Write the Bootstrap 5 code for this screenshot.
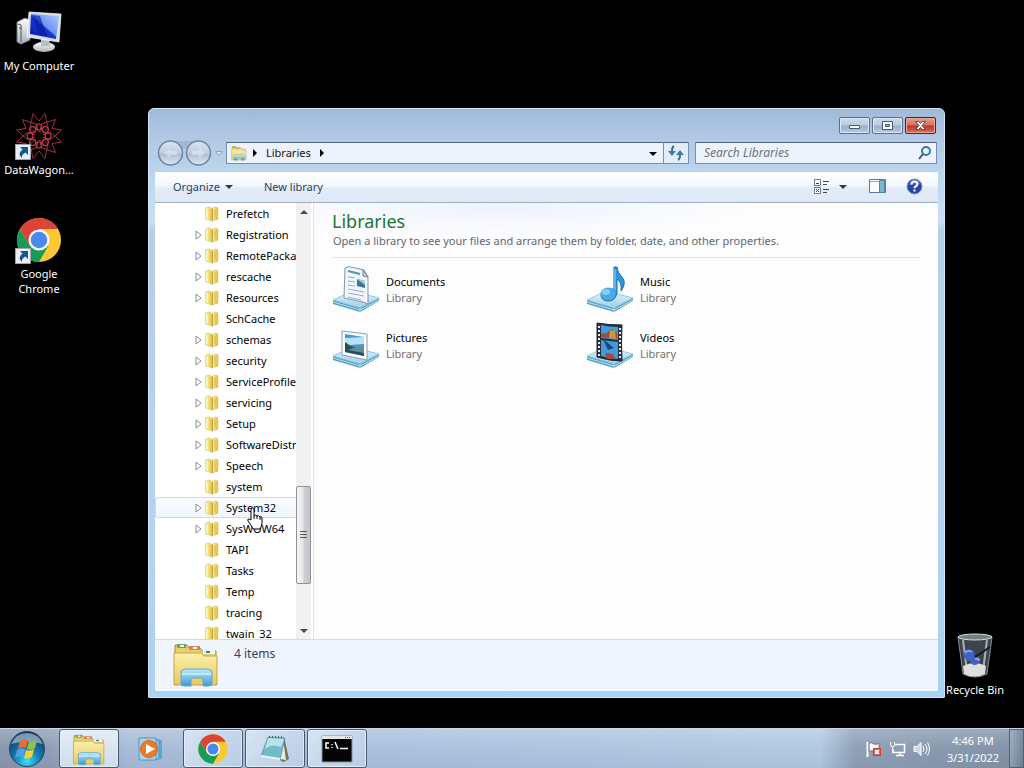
<!DOCTYPE html>
<html lang="en">
<head>
<meta charset="utf-8">
<meta name="viewport" content="width=device-width, initial-scale=1">
<title>Libraries</title>
<link href="https://cdn.jsdelivr.net/npm/bootstrap@5.3.0/dist/css/bootstrap.min.css" rel="stylesheet">
<style>
body{font:11px/16px "Noto Sans","Open Sans",sans-serif;background:#000;color:#000}
button{font:inherit;color:inherit;border:0;background:none;padding:0}
a{color:inherit;text-decoration:none}
svg{display:block;flex:none}
.launcher{width:78px;height:104px;padding-top:8px;color:#fff;line-height:15px;text-align:center;text-shadow:0 1px 2px #000}
.launcher svg{margin-bottom:2px}
.launcher.bin{right:10px;bottom:0}
.win{left:148px;right:79px;top:108px;bottom:30px;padding:0 6px 6px;border:1px solid #d4e6f8;border-radius:6px 6px 1px 1px;
 background:linear-gradient(#9fbad8 0,#b1c9e4 30px,#bcd5ee 64px,#cbdff4 112px,#b5cfe6 122px,#b5d3ee 70%,#a9d2f2)}
.captions{height:33px;padding:8px 2px 0 0;gap:2px}
.cap{width:31px;height:17px;border:1px solid #59708d;border-radius:2px;background:linear-gradient(#cbdcee,#b9cce2 48%,#98b0cc 52%,#b5cbe4);box-shadow:inset 0 0 0 1px #dce8f5}
.cap.shut{border-color:#5a1b21;background:linear-gradient(#e5a193,#d5705c 48%,#bd3520 52%,#d8705d);box-shadow:inset 0 0 0 1px #eda99c}
.navrow{height:30px;padding:0 1px 8px 2px}
.rounds{margin-top:-4px}
.fieldbox{height:22px;border:1px solid #7890ad;background:#edf3fc;border-top-color:#4d627d;color:#111}
.refresh{width:25px;height:22px;border:1px solid #7890ad;border-left:0;border-top-color:#4d627d;background:#e3edfa}
.arrowbox{width:18px;height:20px}
.searchbox{width:242px;margin-left:6px}
.searchbox input{width:200px;border:0;background:none;outline:0;padding:0 0 0 8px;font-size:12px;font-style:italic;color:#6d7380}
.searchbox input::placeholder{color:#6d7380;opacity:1}
.crumb{font-size:11px;margin:0 2px 0 1px}
.cmdbar{height:32px;color:#2b405c;border-bottom:1px solid #a0afc3;padding:0 15px 0 18px;background:linear-gradient(#fff,#f3f8fe 45%,#e2ebf8 55%,#dfe9f6)}
.cmdbar .newlib{margin-left:30px}
.cmdbar .tool{margin-left:20px}
.views{min-height:0}
.tree{width:159px;border-right:1px solid #dfe4ec;background:#fff}
.tree li{height:21px;padding-left:37px;gap:1px;white-space:nowrap;border:1px solid transparent}
.tree li.hot{border-color:#c5dcf3;border-right:0;border-radius:3px 0 0 3px;background:linear-gradient(#fafcff,#eef5fd)}
.tree .twist{width:10px;height:12px}
.tree a{margin-left:5px}
.sbar{width:15px;margin-right:2px;background:#f1f1f3}
.sbar button{height:17px}
.thumb{height:98px;border:1px solid #8e9196;border-radius:2px;background:linear-gradient(90deg,#f6f6f6,#e6e6e8 48%,#cfd0d4 52%,#c4c5ca)}
.up{flex:265 1 0}.down{flex:38 1 0}
.pane{padding:6px 18px 0;background:radial-gradient(260px 36px at 30% 0,#ecf3fc,#fdfdfe00) #fdfdfe}
.pane h1{font-size:18px;line-height:24px;color:#1c7432;margin:0}
.pane .hint{color:#5d6673;border-bottom:1px solid #dce6f0;height:25px;padding-left:1px;white-space:nowrap}
.libs{grid-template-columns:254px 254px;grid-auto-rows:56px;padding-top:8px}
.libs a{gap:6px}
.libs small{font-size:11px;color:#6d7076}
.details{height:53px;border-top:1px solid #cfdae8;background:#f1f5fd;color:#35415c;padding-left:17px}
.details p{font-size:12px;padding:6px 0 0 14px}
.hand{left:246px;top:507px;pointer-events:none}
.tasks{height:40px;border-top:1px solid #c9d6e6;background:linear-gradient(#fff3,#fff0 50%,#0000000a),linear-gradient(90deg,#8997ae 0,#909fb7 50px,#a8bcd8 130px,#a9c2de 400px,#b2c9e3 820px,#8fa1b8 855px,#8392a7)}
.startbtn{width:54px;margin-right:5px}
.task{width:60px;margin-right:2px;border-radius:3px}
.task.open{border:1px solid #48586f;background:linear-gradient(135deg,#d7e4f3,#b7cce4);box-shadow:inset 0 0 0 1px #e1edfa}
.task.front{background:linear-gradient(#e5edf5,#cfdcec)}
.tray{color:#fff;gap:7px}
.clock{width:72px;line-height:17px;text-align:center}
.peek{width:15px;border:1px solid #4f6078;background:linear-gradient(100deg,#a0afc1,#6e7e93)}
</style>
</head>
<body class="vh-100 d-flex flex-column overflow-hidden">
<svg width="0" height="0" class="position-absolute" aria-hidden="true">
 <defs>
  <linearGradient id="gold" x1="0" x2="1"><stop stop-color="#fdf3ae"/><stop offset=".45" stop-color="#f3df7c"/><stop offset="1" stop-color="#d9bc48"/></linearGradient>
  <linearGradient id="yel" x2="0" y2="1"><stop stop-color="#fbf0ac"/><stop offset="1" stop-color="#e8c95c"/></linearGradient>
  <linearGradient id="blu" x2="0" y2="1"><stop stop-color="#b9e9fb"/><stop offset="1" stop-color="#3a9bd4"/></linearGradient>
  <linearGradient id="shelf" x2="0" y2="1"><stop stop-color="#e5f5fb"/><stop offset="1" stop-color="#9bcfe6"/></linearGradient>
  <linearGradient id="glass" x1="0" y1="1" x2="1" y2="0"><stop stop-color="#0a19a8"/><stop offset=".48" stop-color="#1936d6"/><stop offset=".52" stop-color="#6a93f2"/><stop offset="1" stop-color="#b3cdfc"/></linearGradient>
  <linearGradient id="silver" x2="0" y2="1"><stop stop-color="#fff"/><stop offset="1" stop-color="#a9b0b7"/></linearGradient>
  <radialGradient id="orb" cx=".5" cy=".85" r=".8"><stop stop-color="#38e0f5"/><stop offset=".45" stop-color="#167db5"/><stop offset="1" stop-color="#12395f"/></radialGradient>
  <linearGradient id="knob" x2="0" y2="1"><stop stop-color="#d9e5f1"/><stop offset=".5" stop-color="#bfcfdf"/><stop offset=".54" stop-color="#aebfd1"/><stop offset="1" stop-color="#dbe9f5"/></linearGradient>
  <symbol id="folder" viewBox="0 0 16 16"><path d="M8 2l4-1 2 1v11l-6 2z" fill="url(#gold)" stroke="#dcc66c" stroke-width=".6"/><path d="M1.500 2L5 .8 8.500 3v12.200L1.500 13z" fill="url(#gold)" stroke="#dcc66c" stroke-width=".6"/><path d="M8.500 3v12" stroke="#bfa03a" stroke-width="1"/><path d="M10 4l2-1v8l-2 1z" fill="#e3c95c"/><path d="M3 3v9.500" stroke="#fffbd6"/><path d="M11 13h2" stroke="#c9ae55"/></symbol>
  <symbol id="twist" viewBox="0 0 10 12"><path d="M3 2l5 4-5 4z" fill="#fff" stroke="#8b8b8b"/></symbol>
  <symbol id="library" viewBox="0 0 48 48"><path d="M3 5h12l2 3h11l2 3h14v33H3z" fill="#e8cf70" stroke="#a98b32"/><path d="M5 4h9v4H5z" fill="#63a85e"/><path d="M17 6h11v4H17z" fill="#d8835d"/><path d="M31 10h12v4H31z" fill="#eef3f8"/><path d="M8 5h4v2H8z" fill="#eafaea"/><path d="M21 7h4v2h-4z" fill="#fff"/><path d="M34 11h4v2h-4z" fill="#3c7aab"/><path d="M2 13h27l3 3h13v29H2z" fill="url(#yel)" stroke="#c5a546"/><path d="M9 31l4-2h23l4 2v14l-3 1h-6v-6q0-2-2-2h-8q-2 0-2 2v6h-7l-3-1z" fill="url(#blu)" stroke="#5fa6cc"/><path d="M10 34h29" stroke="#e2f7ff" stroke-width="2" opacity=".6"/></symbol>
  <symbol id="base" viewBox="0 0 48 48"><path d="M1 34l19-9 27 7v3L28 46 1 38z" fill="#559fc2"/><path d="M1 34l19-9 27 7-19 10z" fill="url(#shelf)" stroke="#89c3dd" stroke-width=".7"/><path d="M28 42v4M1 36l27 8 19-10" stroke="#b7e2f2" fill="none"/></symbol>
  <symbol id="chrome" viewBox="0 0 48 48"><circle cx="24" cy="24" r="22" fill="#fcc934"/><path d="M24 13h19A22 22 0 0 0 4.900 13L14.500 29.500z" fill="#dc4437"/><path d="M4.900 13A22 22 0 0 0 24 46l9.500-16.500-9.500 5-9.500-5z" fill="#179c58"/><circle cx="24" cy="24" r="10.500" fill="#fff"/><circle cx="24" cy="24" r="8.300" fill="#4a87ee"/></symbol>
  <symbol id="shortcut" viewBox="0 0 16 16"><path d="M.5.500h15v15H.5z" fill="#e9eff5" stroke="#9aa7b3"/><path d="M5 3h8v8l-2.500-2.500Q6 11 7 14 2 10 7.500 5.500z" fill="#195393"/></symbol>
 </defs>
</svg>

<main class="flex-grow-1 position-relative">
 <nav aria-label="Desktop" class="d-flex flex-column align-items-start">
  <a href="#" class="launcher d-flex flex-column align-items-center">
   <svg width="48" height="48" viewBox="0 0 48 48"><path d="M2 14l8-4 5 2v20l-9 4-4-2z" fill="url(#silver)" stroke="#777"/><path d="M3 16l3 1v17M4 20h3" stroke="#555" fill="none"/><ellipse cx="29" cy="39" rx="11" ry="5" fill="url(#silver)"/><path d="M26 29h8l1 9h-9z" fill="#b7bfc6"/><path d="M14 4l32 2-2 28-32-5z" fill="#d5dde6" stroke="#fff" stroke-width=".7"/><path d="M16 6l28 2-3 23-26-5z" fill="url(#glass)"/><path d="M17 7l7 20 8 1-7-20z" fill="#0719a0" opacity=".6"/></svg>
   <span>My Computer</span></a>
  <a href="#" class="launcher d-flex flex-column align-items-center">
   <svg width="48" height="48" viewBox="0 0 48 48"><g fill="none" stroke="#b93c49" stroke-width=".8"><g id="petals"><path id="petal" d="M24 9L30 1.500 33 16 24 24 15 16 18 1.500z"/><use href="#petal" transform="rotate(60 24 24)"/><use href="#petal" transform="rotate(120 24 24)"/><use href="#petal" transform="rotate(180 24 24)"/><use href="#petal" transform="rotate(240 24 24)"/><use href="#petal" transform="rotate(300 24 24)"/></g><g id="rings" stroke-width="1.200"><circle cx="24" cy="15" r="3"/><circle cx="24" cy="33" r="3"/><circle cx="15" cy="24" r="3"/><circle cx="33" cy="24" r="3"/></g><use href="#rings" transform="rotate(45 24 24)"/></g><circle cx="24" cy="24" r="4" fill="#080203"/><use href="#shortcut" x="0" y="32" width="16" height="16"/></svg>
   <span>DataWagon...</span></a>
  <a href="#" class="launcher d-flex flex-column align-items-center">
   <svg width="48" height="48" viewBox="0 0 48 48"><use href="#chrome" width="48" height="48"/><use href="#shortcut" y="32" width="16" height="16"/></svg>
   <span>Google<br>Chrome</span></a>
 </nav>

 <section class="win position-absolute d-flex flex-column" aria-label="Libraries">
  <div class="captions d-flex justify-content-end">
   <button class="cap d-flex justify-content-center align-items-center" aria-label="Minimize"><svg width="13" height="11"><path d="M1.500 5.500h10v3h-10z" fill="#fff" stroke="#475a71"/></svg></button>
   <button class="cap d-flex justify-content-center align-items-center" aria-label="Maximize"><svg width="13" height="11"><path d="M1.500 1.500h10v8h-10zM4.500 4.500v2h4v-2z" fill="#fff" fill-rule="evenodd" stroke="#475a71"/></svg></button>
   <button class="cap shut d-flex justify-content-center align-items-center" aria-label="Close"><svg width="13" height="11"><path d="M1.500 1.500h3l2 2 2-2h3l-3.500 4 3.500 4h-3l-2-2-2 2h-3l3.500-4z" fill="#fff" stroke="#5c4a58"/></svg></button>
  </div>
  <div class="navrow d-flex">
   <svg class="rounds" width="56" height="30" viewBox="0 0 56 30" role="img" aria-label="Back and forward"><path d="M13 3h29v8H13z" fill="#a3b9d2"/><g fill="url(#knob)" stroke="#70859d" stroke-width="1.500"><circle cx="13.500" cy="15" r="12"/><circle cx="41.500" cy="15" r="12"/></g><path d="M7 15l6-5v3h7v4h-7v3zM48 15l-6-5v3h-7v4h7v3z" fill="#e0eaf4" opacity=".6"/></svg>
   <svg width="13" height="22"><path d="M2.500 9.500h7l-3.500 4z" fill="#d7e6f9" stroke="#8ba6ce"/></svg>
   <div class="fieldbox d-flex align-items-center flex-grow-1">
    <svg class="ms-1" width="16" height="16" viewBox="0 0 48 48"><use href="#library" width="48" height="48"/></svg>
    <svg width="14" height="12" class="ms-1"><path d="M2 2l4 4-4 4z"/></svg>
    <a href="#" class="crumb">Libraries</a>
    <svg width="14" height="12" class="ms-1"><path d="M3 2l4 4-4 4z"/></svg>
    <button class="arrowbox ms-auto" aria-label="Previous locations"><svg width="18" height="20"><path d="M4 9h8l-4 4z"/></svg></button>
   </div>
   <button class="refresh" aria-label="Refresh"><svg width="24" height="20"><g fill="none" stroke="#3c6f96" stroke-width="2"><path d="M10 3q-2 1-2 5M14 17q2-1 2-5"/></g><path d="M4 8h8l-4 5zM12 12h8l-4-5z" fill="#3c7c9e"/></svg></button>
   <div class="fieldbox searchbox d-flex align-items-center justify-content-between"><input type="text" aria-label="Search Libraries" placeholder="Search Libraries"><svg class="me-1" width="15" height="16"><circle cx="9" cy="6" r="4" fill="#e7f6fa" stroke="#3a789d" stroke-width="2"/><path d="M6 9l-4 5" stroke="#305b80" stroke-width="2"/></svg></div>
  </div>
  <div class="cmdbar d-flex align-items-center">
   <button class="d-flex align-items-center">Organize<svg width="10" height="8" class="ms-1"><path d="M1 2h8L5 6z" fill="#263b55"/></svg></button>
   <button class="newlib">New library</button>
   <button class="ms-auto d-flex align-items-center" aria-label="Change view"><svg width="18" height="16" fill="none" stroke="#687d91"><path d="M1.500.500h6v6h-6zM1.500 8.500h6v6h-6z" fill="#fff"/><path d="M3 4.500h3M3 10l3 3M3 13l3-3" stroke="#35495f"/><path d="M10 2.500h6M10 5.500h4M10 10.500h6M10 13.500h4" stroke="#35495f"/></svg><svg width="10" height="8" class="ms-2"><path d="M0 2h8L4 6z" fill="#263b55"/></svg></button>
   <button class="tool" aria-label="Preview pane"><svg width="17" height="15"><path d="M.5.500h16v13H.5z" fill="#fafdff" stroke="#567996"/><path d="M1 2.500h15" stroke="#8da7bd"/><path d="M10.500 1.500h5v12h-5z" fill="#75b8ce" stroke="#57889e"/></svg></button>
   <button class="tool" aria-label="Help"><svg width="17" height="17"><circle cx="8.500" cy="8.500" r="7.500" fill="#2643a9" stroke="#8498bd"/><path d="M3 7q1-5 6-5 5 0 5 4" fill="#6b8bdc" opacity=".6"/><path d="M5.500 6.500q0-3 3-3t3 2.500q0 1.500-2 2.500-1 .5-1 1.700" stroke="#fff" stroke-width="2" fill="none"/><path d="M7.500 11.500h2v2h-2z" fill="#fff"/></svg></button>
  </div>
  <div class="views d-flex flex-grow-1 overflow-hidden">
   <div class="tree d-flex flex-shrink-0">
    <ul class="list-unstyled m-0 flex-grow-1 overflow-hidden">
     <li class="d-flex align-items-center"><span class="twist"></span><svg width="16" height="16"><use href="#folder"/></svg><a href="#">Prefetch</a></li>
     <li class="d-flex align-items-center"><svg class="twist"><use href="#twist"/></svg><svg width="16" height="16"><use href="#folder"/></svg><a href="#">Registration</a></li>
     <li class="d-flex align-items-center"><svg class="twist"><use href="#twist"/></svg><svg width="16" height="16"><use href="#folder"/></svg><a href="#">RemotePackages</a></li>
     <li class="d-flex align-items-center"><svg class="twist"><use href="#twist"/></svg><svg width="16" height="16"><use href="#folder"/></svg><a href="#">rescache</a></li>
     <li class="d-flex align-items-center"><svg class="twist"><use href="#twist"/></svg><svg width="16" height="16"><use href="#folder"/></svg><a href="#">Resources</a></li>
     <li class="d-flex align-items-center"><span class="twist"></span><svg width="16" height="16"><use href="#folder"/></svg><a href="#">SchCache</a></li>
     <li class="d-flex align-items-center"><svg class="twist"><use href="#twist"/></svg><svg width="16" height="16"><use href="#folder"/></svg><a href="#">schemas</a></li>
     <li class="d-flex align-items-center"><svg class="twist"><use href="#twist"/></svg><svg width="16" height="16"><use href="#folder"/></svg><a href="#">security</a></li>
     <li class="d-flex align-items-center"><svg class="twist"><use href="#twist"/></svg><svg width="16" height="16"><use href="#folder"/></svg><a href="#">ServiceProfiles</a></li>
     <li class="d-flex align-items-center"><svg class="twist"><use href="#twist"/></svg><svg width="16" height="16"><use href="#folder"/></svg><a href="#">servicing</a></li>
     <li class="d-flex align-items-center"><svg class="twist"><use href="#twist"/></svg><svg width="16" height="16"><use href="#folder"/></svg><a href="#">Setup</a></li>
     <li class="d-flex align-items-center"><svg class="twist"><use href="#twist"/></svg><svg width="16" height="16"><use href="#folder"/></svg><a href="#">SoftwareDistribution</a></li>
     <li class="d-flex align-items-center"><svg class="twist"><use href="#twist"/></svg><svg width="16" height="16"><use href="#folder"/></svg><a href="#">Speech</a></li>
     <li class="d-flex align-items-center"><span class="twist"></span><svg width="16" height="16"><use href="#folder"/></svg><a href="#">system</a></li>
     <li class="hot d-flex align-items-center"><svg class="twist"><use href="#twist"/></svg><svg width="16" height="16"><use href="#folder"/></svg><a href="#">System32</a></li>
     <li class="d-flex align-items-center"><svg class="twist"><use href="#twist"/></svg><svg width="16" height="16"><use href="#folder"/></svg><a href="#">SysWOW64</a></li>
     <li class="d-flex align-items-center"><span class="twist"></span><svg width="16" height="16"><use href="#folder"/></svg><a href="#">TAPI</a></li>
     <li class="d-flex align-items-center"><span class="twist"></span><svg width="16" height="16"><use href="#folder"/></svg><a href="#">Tasks</a></li>
     <li class="d-flex align-items-center"><span class="twist"></span><svg width="16" height="16"><use href="#folder"/></svg><a href="#">Temp</a></li>
     <li class="d-flex align-items-center"><span class="twist"></span><svg width="16" height="16"><use href="#folder"/></svg><a href="#">tracing</a></li>
     <li class="d-flex align-items-center"><span class="twist"></span><svg width="16" height="16"><use href="#folder"/></svg><a href="#">twain_32</a></li>
    </ul>
    <div class="sbar d-flex flex-column flex-shrink-0">
     <button aria-label="Scroll up"><svg width="15" height="17"><path d="M4 11l4-4 4 4z" fill="#4a4a4a"/></svg></button>
     <div class="up"></div>
     <div class="thumb d-flex align-items-center justify-content-center"><svg width="7" height="8"><path d="M0 .5h7M0 3.500h7M0 6.500h7" stroke="#555"/></svg></div>
     <div class="down"></div>
     <button aria-label="Scroll down"><svg width="15" height="17"><path d="M4 7l4 4 4-4z" fill="#4a4a4a"/></svg></button>
    </div>
   </div>
   <div class="pane flex-grow-1 overflow-hidden">
    <h1 class="fw-normal">Libraries</h1>
    <p class="hint m-0">Open a library to see your files and arrange them by folder, date, and other properties.</p>
    <div class="libs d-grid">
     <a href="#" class="d-flex align-items-start"><svg width="48" height="48" viewBox="0 0 48 48"><use href="#base" width="48" height="48"/><path d="M13 2q3-2 6-1l13 3 4 7v27l-5-2-19-4z" fill="#f1f5fc" stroke="#8596ac"/><path d="M31 4v6l5 1z" fill="#bcd5e5" stroke="#74889b"/><path d="M16 5l12 3" stroke="#4d9aad" stroke-width="2"/><path d="M16 11l7 1M16 15l7 1M16 19l7 1M16 23l16 3M16 27l16 3M16 31l13 3" stroke="#9badc5"/><path d="M25 13l8 2v7l-8-2z" fill="#3e7794"/><path d="M25 13l8 2v4z" fill="#abcde6"/></svg><span class="pt-2 d-flex flex-column">Documents<small>Library</small></span></a>
     <a href="#" class="d-flex align-items-start"><svg width="48" height="48" viewBox="0 0 48 48"><use href="#base" width="48" height="48"/><path d="M28 1h3q0 5 5 10 5 6-1 14 1-9-4-12v14q-2 9-10 8-6-1-6-6 2-7 13-6z" fill="#3095df" stroke="#1b6fae"/><ellipse cx="22" cy="28" rx="7.500" ry="6.500" fill="#4ba9e9"/><ellipse cx="20" cy="26" rx="4" ry="3" fill="#b2e3fc" opacity=".6"/><path d="M29 3v21" stroke="#9ad6fa"/></svg><span class="pt-2 d-flex flex-column">Music<small>Library</small></span></a>
     <a href="#" class="d-flex align-items-start"><svg width="48" height="48" viewBox="0 0 48 48"><use href="#base" width="48" height="48"/><path d="M10 9l25 3v26l-25-5z" fill="#fafcff" stroke="#899cad"/><path d="M13 12l19 3v19l-19-4z" fill="#4796d5"/><path d="M13 16l19-1v7l-15 1-4-2z" fill="#bce1f5"/><path d="M13 20q7 6 19 8v6l-19-4z" fill="#274f57"/><path d="M16 28q7-4 16-2v5z" fill="#628f92"/></svg><span class="pt-2 d-flex flex-column">Pictures<small>Library</small></span></a>
     <a href="#" class="d-flex align-items-start"><svg width="48" height="48" viewBox="0 0 48 48"><use href="#base" width="48" height="48"/><path d="M11 1q12 2 25 2-1 18 0 36-12 0-25-4z" fill="#292f38" stroke="#152431"/><path d="M15 3q8 2 17 2v13l-17-2zM15 18l17 2v17q-9 0-17-3z" fill="#3f9bd9"/><path d="M15 12l6-1 4-4 6 4v6l-16-2zM19 31l8 1 2 5h-8z" fill="#a8483d"/><path d="M24 8l5 1 1 8-7-1z" fill="#c79a3e"/><path d="M17 17l11 9-6 2z" fill="#25437b"/><path d="M13 4v31M34 6v32" stroke="#e2f0ec" stroke-width="2" stroke-dasharray="2 2"/></svg><span class="pt-2 d-flex flex-column">Videos<small>Library</small></span></a>
    </div>
   </div>
  </div>
  <footer class="details d-flex"><svg width="48" height="48"><use href="#library"/></svg><p class="m-0">4 items</p></footer>
 </section>

 <svg class="hand position-absolute" width="17" height="23" viewBox="0 0 17 23"><path d="M5 13V3q0-2 1.500-2T8 3v6q2-2 3 0 2-1 3 1 2-1 2 1v5q0 3-2 6H7q-1-3-5-8-1-2 1-2z" fill="#fff" stroke="#000"/><path d="M8 9v3M11 9v3M14 10v3" stroke="#000"/></svg>
 <a href="#" class="launcher bin position-absolute d-flex flex-column align-items-center"><svg width="48" height="48" viewBox="0 0 48 48"><path d="M7 5l5 37q12 6 24 0l5-37z" fill="#3b444b" stroke="#858f96"/><path d="M12 8l4 31M36 8l-4 31" stroke="#a7b0b5" stroke-width="2"/><path d="M12 34q12-6 23 0l-1 8q-11 5-21 0z" fill="#dedfdc"/><path d="M12 22q3-6 9-4 4 2 2 6 6 0 6 4-1 5-6 5-3-1-3-4-6 1-8-7z" fill="#4560c4"/><path d="M14 21q3-4 7-1M24 27q4-1 4 2" stroke="#8ea2ea" fill="none" stroke-width="2"/><path d="M24 25l15-10" stroke="#131a23" stroke-width="2"/><ellipse cx="24" cy="5" rx="17" ry="3" fill="#777f83" stroke="#d9dee0"/></svg><span class="text-nowrap">Recycle Bin</span></a>
</main>

<footer class="tasks d-flex flex-shrink-0">
 <button class="startbtn d-flex justify-content-end align-items-center" aria-label="Start"><svg width="54" height="38" viewBox="0 0 54 38"><circle cx="27" cy="19" r="17.500" fill="url(#orb)" stroke="#244661"/><path d="M11 14q5-11 16-11t16 11q-16-5-32 0z" fill="#d2e2ed" opacity=".55"/><path d="M20 11q4-3 8-1l-2 8q-4-2-8 1z" fill="#ed6a31"/><path d="M29 11q4 2 8-1l-2 8q-4 3-8 1z" fill="#8dc34a"/><path d="M17 20q4-3 8-1l-2 8q-4-2-8 1z" fill="#4aa4e6"/><path d="M26 20q4 2 8-1l-2 8q-4 3-8 1z" fill="#fbcd39"/></svg></button>
 <button class="task open front d-flex justify-content-center align-items-center" aria-label="Windows Explorer"><svg width="34" height="34"><use href="#library"/></svg></button>
 <button class="task d-flex justify-content-center align-items-center" aria-label="Media Player"><svg width="32" height="32" viewBox="0 0 32 32"><path d="M15 5l12 2v19l-12 1z" fill="#60a7cc"/><path d="M9 5l15 2v19l-15 1z" fill="#8dc8e5" stroke="#5797bd"/><path d="M4 5h17v22H4z" fill="#a5d3ed" stroke="#5995b8"/><circle cx="14" cy="16" r="8.500" fill="#ed7b26" stroke="#d5651a"/><path d="M11 11l9 5-9 5z" fill="#fff"/></svg></button>
 <button class="task open d-flex justify-content-center align-items-center" aria-label="Google Chrome"><svg width="32" height="32"><use href="#chrome"/></svg></button>
 <button class="task open d-flex justify-content-center align-items-center" aria-label="Notepad"><svg width="32" height="32" viewBox="0 0 32 32"><path d="M25 4l5 22-6 3-6-4z" fill="#71715f"/><path d="M24 5l3 22-7-1z" fill="#e8e9de"/><path d="M9 4l17 1-5 21-19-3z" fill="#70bccb" stroke="#477f8b" stroke-width=".6"/><path d="M9 5l16 1-3 8q-9-4-16 2z" fill="#b8e4e8"/><path d="M10 4h15" stroke="#526b73" stroke-width="2" stroke-dasharray="1 2"/><path d="M2 23l19 3" stroke="#e9f3ef" stroke-width="2"/></svg></button>
 <button class="task open d-flex justify-content-center align-items-center" aria-label="Command Prompt"><svg width="32" height="28" viewBox="0 0 32 28"><path d="M1 1h30v26H1z" fill="#050505" stroke="#86929c"/><path d="M1 1h30v3H1z" fill="#e5e7e7"/><path d="M24 2.500h5" stroke="#566" stroke-dasharray="1 1"/><path d="M8 8H5v5h3M11 9v1M11 12v1M14 7l3 7M19 13.500h8" stroke="#fff" stroke-width="1.500" fill="none"/></svg></button>
 <div class="tray ms-auto d-flex align-items-center">
  <svg width="17" height="16"><path d="M2.500 1v15" stroke="#fff" stroke-width="2"/><path d="M4 2q3-1 5 1 3 1 5-1v8H4z" fill="#f4f6f8" stroke="#697789"/><path d="M8 7h8v8H8z" fill="#d63b38"/><path d="M10 9l4 4m0-4l-4 4" stroke="#fff" stroke-width="2"/></svg>
  <svg width="17" height="16" fill="none" stroke="#fff"><path d="M6 3.500h9.500v8H4V8M7 14.500h8M11 12v2" stroke-width="1.500"/><path d="M1.500 1v3q0 2 2 2t2-2V1M3.500 6v6"/></svg>
  <svg width="17" height="16" fill="none" stroke="#fff"><path d="M1 5.500h3l4-4v13l-4-4H1z" fill="#cfd8e2"/><path d="M10 5q2 3 0 6M12 3q4 5 0 10M14.500 1.500q4 6.500 0 13"/></svg>
  <div class="d-flex align-self-stretch"><time class="clock align-self-center">4:46 PM<br>3/31/2022</time><button class="peek" aria-label="Show desktop"></button></div>
 </div>
</footer>
<script src="https://cdn.jsdelivr.net/npm/bootstrap@5.3.0/dist/js/bootstrap.bundle.min.js"></script>
</body>
</html>
